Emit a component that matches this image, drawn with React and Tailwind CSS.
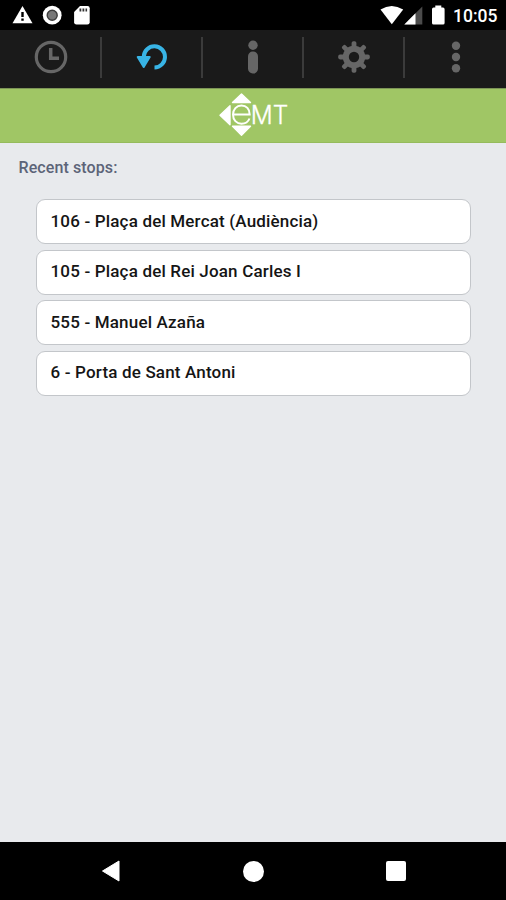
const stops = [
  { id: 106, name: 'Plaça del Mercat (Audiència)' },
  { id: 105, name: 'Plaça del Rei Joan Carles I' },
  { id: 555, name: 'Manuel Azaña' },
  { id: 6, name: 'Porta de Sant Antoni' },
];

function StatusBar() {
  return (
    <div className="flex h-[30px] items-center justify-between bg-black pr-[9px] pl-3 text-white">
      <svg width="79" height="30" viewBox="12 0 79 30" fill="currentColor">
        <path d="M22.5 6 32.5 23.3H12.5Z" />
        <path d="M21.3 12h2.4v5h-2.4zM21.3 18.6h2.4v2.2h-2.4z" fill="#000" />
        <circle cx="52.2" cy="15.2" r="9.4" />
        <circle cx="52.2" cy="15.2" r="5" fill="#777" stroke="#3c3c3c" strokeWidth="1.4" />
        <path d="M80 6h7.5q2.2 0 2.2 2.2v14q0 2.4-2.4 2.4H76.5q-2.4 0-2.4-2.4V12Z" />
        <path d="M79.5 8.5h1.8v3h-1.8zM82.5 8.5h1.8v3h-1.8zM85.5 8.5h1.6v3h-1.6z" fill="#333" />
      </svg>
      <div className="flex items-center">
        <svg width="66" height="30" viewBox="380 0 66 30" fill="currentColor">
          <path d="M380.5 9.6Q391.7 2.6 403.2 9.6L391.8 24.3Z" />
          <path d="M422.3 6.5V24.5H404.3Z" fill="#4b4b4b" />
          <path d="M415.5 13.3V24.5H404.3Z" />
          <path d="M435.3 5.6h6v2h1.7q1.6 0 1.6 1.6v13.8q0 1.6-1.6 1.6h-9.4q-1.6 0-1.6-1.6V9.2q0-1.6 1.6-1.6h1.7Z" />
        </svg>
        <span className="ml-[7px] w-[44px] pt-px text-[17.5px] leading-[30px] font-medium whitespace-nowrap">10:05</span>
      </div>
    </div>
  );
}

function ClockIcon() {
  return (
    <svg width="34" height="34" viewBox="0 0 34 34" fill="none" stroke="#666" strokeWidth="3.2">
      <circle cx="17" cy="17" r="14.7" />
      <path d="M16.7 8v10.2h8.3" strokeWidth="3.5" />
    </svg>
  );
}

function RecentIcon() {
  return (
    <svg width="34" height="34" viewBox="0 0 34 34">
      <path d="M8.8 18V16.500A10.6 10.6 0 1 1 19.5 27.500" fill="none" stroke="#38b4e5" strokeWidth="4" />
      <path d="M2.700 17H14.700L8.700 27Z" fill="#38b4e5" stroke="#38b4e5" strokeWidth="2" strokeLinejoin="round" />
    </svg>
  );
}

function InfoIcon() {
  return (
    <svg width="34" height="34" viewBox="0 0 34 34" fill="#666">
      <circle cx="17" cy="5.2" r="4.7" />
      <rect x="12" y="11.5" width="10" height="22" rx="4.7" />
    </svg>
  );
}

function GearIcon() {
  return (
    <svg width="34" height="34" viewBox="0 0 34 34" fill="#666">
      {[0, 45, 90, 135].map((angle) => (
        <rect key={angle} x="14.6" y="1.2" width="4.8" height="31.6" rx="1.8" transform={`rotate(${angle} 17 17)`} />
      ))}
      <circle cx="17" cy="17" r="11.2" />
      <circle cx="17" cy="17" r="5.2" fill="#1a1a1a" />
    </svg>
  );
}

function MoreIcon() {
  return (
    <svg width="34" height="34" viewBox="0 0 34 34" fill="#666">
      <circle cx="17" cy="5.7" r="4.2" />
      <circle cx="17" cy="17" r="4.2" />
      <circle cx="17" cy="28.3" r="4.2" />
    </svg>
  );
}

const tabs = [ClockIcon, RecentIcon, InfoIcon, GearIcon, MoreIcon];

function TabBar() {
  return (
    <div className="grid h-[58px] grid-cols-5 bg-[#1a1a1a] pt-[7px] pb-[10px] pl-px">
      {tabs.map((Icon, i) => (
        <div key={i} className={`flex items-center justify-center pb-px ${i < 4 ? 'border-r-2 border-[#3b3b3b]' : ''}`}>
          <Icon />
        </div>
      ))}
    </div>
  );
}

function Header() {
  return (
    <div className="flex h-[55px] justify-center border-y border-t-[#7d9557] border-b-[#95bb5c] bg-[#a0c665]">
      <svg width="70" height="53" viewBox="218 89 70 53" fill="#fff">
        <path d="M241.500 94 250.500 102.500H232.500ZM220 115.200 230 105.800V124.700ZM232.500 126.300H250.500L241.500 135.300Z" stroke="#fff" strokeWidth="1.4" strokeLinejoin="round" />
        <path d="M233.2 114.5H249.7C249.7 109 246.3 105.5 241.5 105.5C236.5 105.5 233 109.3 233 114.6C233 120 236.5 123.7 241.5 123.7C245.2 123.7 248.2 121.8 249.5 118.5" fill="none" stroke="#fff" strokeWidth="2" />
        <text x="250.8" y="123.9" fontFamily="Inter, sans-serif" fontWeight="300" fontSize="25" textLength="37.5" lengthAdjust="spacingAndGlyphs" stroke="#fff" strokeWidth=".3">MT</text>
      </svg>
    </div>
  );
}

function NavBar() {
  return (
    <div className="flex h-[58px] items-center justify-between bg-black pr-[100px] pl-[101px]">
      <svg width="19" height="22" viewBox="0 0 19 22" fill="#fff">
        <path d="M18 1V21L1.5 11Z" stroke="#fff" strokeLinejoin="round" />
      </svg>
      <div className="size-[21px] rounded-full bg-white" />
      <div className="size-[20px] rounded-[2px] bg-white" />
    </div>
  );
}

export default function App() {
  return (
    <div className="flex h-[900px] w-[506px] flex-col overflow-hidden bg-[#e8eaed] font-[Roboto,sans-serif]">
      <StatusBar />
      <TabBar />
      <Header />
      <main className="flex-1 px-[18px] pt-[15px]">
        <h1 className="pl-[0.5px] text-[16px] leading-5 font-medium tracking-[0.1px] text-[#5c6478]">Recent stops:</h1>
        <ul className="mt-[21px] mr-[17px] ml-[18px] flex flex-col gap-[5.5px]">
          {stops.map((stop) => (
            <li key={stop.id} className="flex h-[45px] items-center rounded-[9px] border border-[#c3c6ca] bg-white pl-[13.5px] text-[17px] font-medium tracking-[0.17px] text-[#151515]">
              {stop.id} - {stop.name}
            </li>
          ))}
        </ul>
      </main>
      <NavBar />
    </div>
  );
}
